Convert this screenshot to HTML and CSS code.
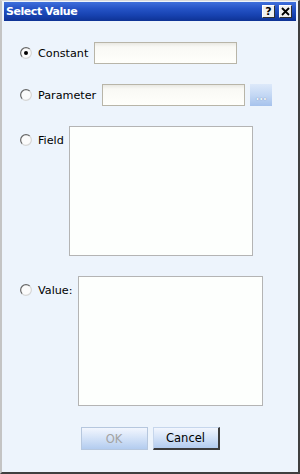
FILE: index.html
```html
<!DOCTYPE html>
<html>
<head>
<meta charset="utf-8">
<link rel="stylesheet" href="styles.css">
</head>
<body>
<div class="window">
  <div class="titlebar">
    <span class="title">Select Value</span>
    <div class="tbtns">
      <span class="tbtn">?</span>
      <span class="tbtn"><svg width="9" height="9" viewBox="0 0 9 9"><path d="M1 1 L8 8 M8 1 L1 8" stroke="#000" stroke-width="1.8" fill="none"/></svg></span>
    </div>
  </div>
  <div class="content">
    <div class="row">
      <div class="opt">
        <svg class="radio" width="12" height="12" viewBox="0 0 12 12"><circle cx="6" cy="6" r="5.4" fill="#fbfbfb"/><path d="M2.2 9.8 A5.3 5.3 0 0 1 9.8 2.2" fill="none" stroke="#666" stroke-width="1.2"/><path d="M9.8 2.2 A5.3 5.3 0 0 1 2.2 9.8" fill="none" stroke="#d6d6d6" stroke-width="1.2"/><circle cx="6" cy="6" r="2" fill="#000"/></svg>
        <span class="label">Constant</span>
      </div>
      <div class="input"></div>
    </div>
    <div class="row">
      <div class="opt">
        <svg class="radio" width="12" height="12" viewBox="0 0 12 12"><circle cx="6" cy="6" r="5.4" fill="#fbfbfb"/><path d="M2.2 9.8 A5.3 5.3 0 0 1 9.8 2.2" fill="none" stroke="#666" stroke-width="1.2"/><path d="M9.8 2.2 A5.3 5.3 0 0 1 2.2 9.8" fill="none" stroke="#d6d6d6" stroke-width="1.2"/></svg>
        <span class="label">Parameter</span>
      </div>
      <div class="input"></div>
      <div class="browse">...</div>
    </div>
    <div class="row tall">
      <div class="opt">
        <svg class="radio" width="12" height="12" viewBox="0 0 12 12"><circle cx="6" cy="6" r="5.4" fill="#fbfbfb"/><path d="M2.2 9.8 A5.3 5.3 0 0 1 9.8 2.2" fill="none" stroke="#666" stroke-width="1.2"/><path d="M9.8 2.2 A5.3 5.3 0 0 1 2.2 9.8" fill="none" stroke="#d6d6d6" stroke-width="1.2"/></svg>
        <span class="label">Field</span>
      </div>
      <div class="list field"></div>
    </div>
    <div class="row tall">
      <div class="opt">
        <svg class="radio" width="12" height="12" viewBox="0 0 12 12"><circle cx="6" cy="6" r="5.4" fill="#fbfbfb"/><path d="M2.2 9.8 A5.3 5.3 0 0 1 9.8 2.2" fill="none" stroke="#666" stroke-width="1.2"/><path d="M9.8 2.2 A5.3 5.3 0 0 1 2.2 9.8" fill="none" stroke="#d6d6d6" stroke-width="1.2"/></svg>
        <span class="label">Value:</span>
      </div>
      <div class="list value"></div>
    </div>
    <div class="actions">
      <div class="btn disabled">OK</div>
      <div class="btn cancel">Cancel</div>
    </div>
  </div>
</div>
</body>
</html>
```
FILE: styles.css
```css
* { box-sizing: border-box; }
body {
  margin: 0;
  font-family: "DejaVu Sans", Verdana, sans-serif;
  font-size: 11px;
  color: #000;
}
.window {
  width: 300px;
  height: 474px;
  background: #edf4fc;
  border-style: solid;
  border-width: 1px 2px 2px 2px;
  border-color: #d9d9d9 #3f3f3f #3f3f3f #c4c4c4;
  padding: 1px 2px 0 2px;
  display: flex;
  flex-direction: column;
}
.titlebar {
  height: 19px;
  flex: none;
  background: linear-gradient(#3f6fdb, #2553c6 35%, #1742b0 70%, #0e3294);
  display: flex;
  align-items: center;
  justify-content: space-between;
  padding: 0 4px 0 2px;
}
.title {
  color: #fff;
  font-weight: bold;
  font-size: 11px;
  letter-spacing: -0.45px;
}
.tbtns {
  display: flex;
  gap: 4px;
}
.tbtn {
  width: 13px;
  height: 13px;
  background: #f0f0f0;
  border: 1px solid;
  border-color: #ffffff #303030 #303030 #ffffff;
  display: flex;
  align-items: center;
  justify-content: center;
  font-weight: bold;
  font-size: 11px;
  line-height: 1;
}
.content {
  flex: 1;
  padding-top: 21px;
  display: flex;
  flex-direction: column;
  gap: 20px;
}
.row {
  display: flex;
  align-items: center;
  padding-left: 16px;
}
.row.tall { align-items: flex-start; }
.opt {
  display: flex;
  align-items: center;
  height: 22px;
  margin-right: 6px;
}
.tall .opt { margin-top: 3px; margin-right: 5px; }
.label { font-size: 11.2px; }
.radio {
  flex: none;
  margin-right: 6px;
}
.input {
  width: 143px;
  height: 22px;
  border: 1px solid #b8b5a8;
  background: linear-gradient(#e9e8e2, #f9f9f5 4px, #fffffb);
}
.browse {
  width: 22px;
  height: 22px;
  margin-left: 5px;
  background: linear-gradient(#dde9fa, #c4d8f4 50%, #a6c2ec);
  color: #eef3fa;
  font-size: 10px;
  font-weight: bold;
  display: flex;
  align-items: center;
  justify-content: center;
  padding-top: 2px;
  text-shadow: 0 0 1px #5f7599;
}
.list {
  height: 130px;
  background: #fdfffd;
  border: 1px solid #b4b4b4;
}
.list.field { width: 184px; }
.list.value { width: 185px; }
.actions {
  display: flex;
  justify-content: center;
  gap: 5px;
  margin-top: 1px;
}
.btn {
  width: 67px;
  height: 23px;
  display: flex;
  align-items: center;
  justify-content: center;
  font-size: 11.5px;
  background: linear-gradient(#f2f6fe, #d6e4f8 45%, #b3ccef);
}
.btn.disabled {
  color: #a3a3a3;
  border: 1px solid #b6c7de;
}
.btn.cancel {
  border-style: solid;
  border-width: 1px 2px 2px 1px;
  border-color: #c6d6ec #3c3c3c #3c3c3c #c6d6ec;
}
```
